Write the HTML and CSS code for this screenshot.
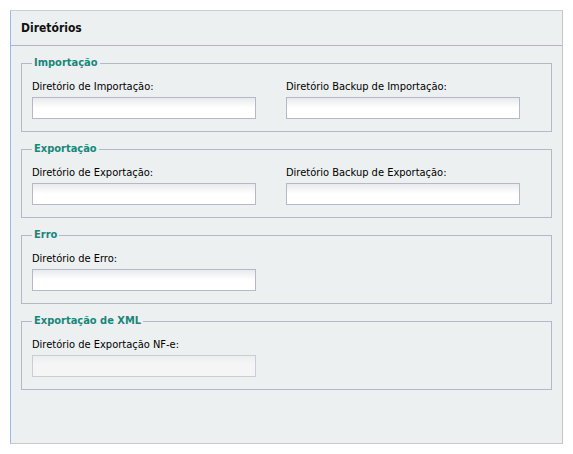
FILE: index.html
```html
<!DOCTYPE html>
<html lang="pt">
<head>
<meta charset="utf-8">
<title>Diretórios</title>
<link rel="stylesheet" href="styles.css">
</head>
<body>
<div class="panel">
  <div class="panel-header">Diretórios</div>
  <div class="panel-body">
    <fieldset class="group">
      <legend>Importação</legend>
      <div class="row">
        <div class="field">
          <label>Diretório de Importação:</label>
          <input type="text" class="input">
        </div>
        <div class="field">
          <label>Diretório Backup de Importação:</label>
          <input type="text" class="input">
        </div>
      </div>
    </fieldset>
    <fieldset class="group">
      <legend>Exportação</legend>
      <div class="row">
        <div class="field">
          <label>Diretório de Exportação:</label>
          <input type="text" class="input">
        </div>
        <div class="field">
          <label>Diretório Backup de Exportação:</label>
          <input type="text" class="input">
        </div>
      </div>
    </fieldset>
    <fieldset class="group">
      <legend>Erro</legend>
      <div class="row">
        <div class="field">
          <label>Diretório de Erro:</label>
          <input type="text" class="input">
        </div>
      </div>
    </fieldset>
    <fieldset class="group">
      <legend>Exportação de XML</legend>
      <div class="row">
        <div class="field">
          <label>Diretório de Exportação NF-e:</label>
          <input type="text" class="input input-disabled" disabled>
        </div>
      </div>
    </fieldset>
  </div>
</div>
</body>
</html>
```
FILE: styles.css
```css
html, body {
  margin: 0;
  padding: 0;
  background: #ffffff;
}
body {
  font-family: "DejaVu Sans Condensed", "Liberation Sans", sans-serif;
  font-size: 11px;
  color: #000;
}
.panel {
  margin: 10px 0 0 10px;
  width: 551px;
  height: 432px;
  background: #edf0f1;
  border-left: 1px solid #99bbe8;
  border-top: 1px solid #c8d0da;
  border-right: 1px solid #c6c6c6;
  border-bottom: 1px solid #c9c9c9;
  display: flex;
  flex-direction: column;
}
.panel-header {
  height: 34px;
  line-height: 34px;
  padding-left: 10px;
  font-weight: bold;
  font-size: 12px;
  color: #111;
  border-bottom: 1px solid #99bbe8;
}
.panel-body {
  padding: 10px 10px 0 10px;
  display: flex;
  flex-direction: column;
  gap: 10px;
}
.group {
  margin: 0;
  padding: 10px 10px 12px 10px;
  border: 1px solid #b5b8c8;
  min-width: 0;
}
.group legend {
  padding: 0 2px;
  font-weight: bold;
  font-size: 11px;
  line-height: 14px;
  color: #17877a;
}
.row {
  display: grid;
  grid-template-columns: 224px 234px;
  column-gap: 30px;
}
.field {
  display: flex;
  flex-direction: column;
  gap: 3px;
}
.field label {
  line-height: 14px;
  height: 14px;
  white-space: nowrap;
}
.input {
  box-sizing: border-box;
  width: 100%;
  height: 22px;
  margin: 0;
  padding: 0 3px;
  border: 1px solid #b5b8c8;
  background: linear-gradient(to bottom, #e8eaed 0px, #ffffff 10px, #ffffff 100%);
  font: inherit;
  outline: none;
}
.input-disabled {
  border-color: #c9cdd5;
  background: linear-gradient(to bottom, #eceeef 0px, #f4f6f6 8px, #f4f6f6 100%);
}
```
